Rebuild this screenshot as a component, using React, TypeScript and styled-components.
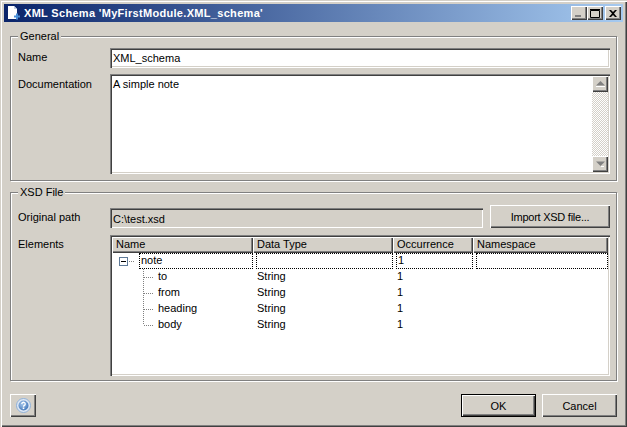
import React from 'react';
import styled, { createGlobalStyle, css } from 'styled-components';

const GlobalStyle = createGlobalStyle`
  html, body {
    margin: 0;
    padding: 0;
    background: #d4d0c8;
  }
  body {
    font-family: "Liberation Sans", Arial, sans-serif;
    font-size: 11px;
    color: #000;
  }
  * {
    box-sizing: border-box;
  }
`;

const raised = css`
  background: #d4d0c8;
  box-shadow: inset 1px 1px 0 #fff, inset -1px -1px 0 #404040, inset -2px -2px 0 #808080;
`;

const sunken = css`
  box-shadow: inset 1px 1px 0 #808080, inset 2px 2px 0 #404040, inset -1px -1px 0 #fff, inset -2px -2px 0 #d4d0c8;
`;

const Window = styled.div`
  width: 627px;
  height: 427px;
  padding: 4px;
  display: flex;
  flex-direction: column;
  background: #d4d0c8;
  box-shadow: inset 1px 1px 0 #d4d0c8, inset 2px 2px 0 #fff, inset -1px -1px 0 #404040, inset -2px -2px 0 #808080;
`;

const TitleBar = styled.div`
  height: 18px;
  flex-shrink: 0;
  display: flex;
  align-items: center;
  padding: 0 2px;
  background: linear-gradient(to right, #0a246a, #a6caf0);
`;

const TitleIcon = styled.svg`
  width: 16px;
  height: 16px;
  margin-right: 2px;
  flex-shrink: 0;
`;

const TitleText = styled.span`
  flex: 1;
  color: #fff;
  font-weight: bold;
  font-size: 11px;
  letter-spacing: 0.31px;
  white-space: nowrap;
`;

const CaptionButton = styled.div<{ $gap?: boolean }>`
  ${raised}
  width: 16px;
  height: 14px;
  margin-left: ${p => (p.$gap ? '2px' : '0')};
  display: flex;
  align-items: center;
  justify-content: center;
`;

const Body = styled.div`
  flex: 1;
  display: flex;
  flex-direction: column;
  padding: 8px 6px 6px 6px;
`;

const Group = styled.fieldset<{ $height: number; $gapTop?: number; $top: number; $gap: number }>`
  margin: ${p => p.$gapTop ?? 0}px 0 0;
  padding: ${p => p.$top}px 6px 0 7px;
  height: ${p => p.$height}px;
  min-width: 0;
  border: 1px solid #808080;
  box-shadow: inset 1px 1px 0 #fff, 1px 1px 0 #fff;
  display: flex;
  flex-direction: column;
  gap: ${p => p.$gap}px;
`;

const GroupTitle = styled.legend`
  margin-left: 0;
  padding: 0 2px;
  background: #d4d0c8;
  line-height: 13px;
`;

const FieldRow = styled.div`
  display: grid;
  grid-template-columns: 92px 1fr;
  align-items: start;
`;

const Label = styled.label<{ $top: number }>`
  line-height: 13px;
  padding-top: ${p => p.$top}px;
`;

const TextBox = styled.div`
  ${sunken}
  height: 20px;
  padding: 3px;
  line-height: 14px;
  background: #fff;
`;

const NoteArea = styled.div`
  ${sunken}
  height: 100px;
  background: #fff;
  display: flex;
  justify-content: space-between;
  padding: 2px;
`;

const NoteText = styled.div`
  padding: 1px;
  line-height: 14px;
`;

const ScrollBar = styled.div`
  width: 16px;
  display: flex;
  flex-direction: column;
  background: repeating-conic-gradient(#d4d0c8 0 25%, #fff 0 50%) 0 0 / 2px 2px;
`;

const ScrollButton = styled.div`
  ${raised}
  width: 16px;
  height: 16px;
  display: flex;
  align-items: center;
  justify-content: center;
`;

const ScrollTrack = styled.div`
  flex: 1;
`;

const PathRow = styled.div`
  display: flex;
  align-items: flex-end;
  gap: 7px;
`;

const PathBox = styled(TextBox)`
  flex: 1;
  padding-top: 4px;
  background: #d4d0c8;
`;

const PushButton = styled.button<{ $width: number; $isDefault?: boolean }>`
  ${raised}
  width: ${p => p.$width}px;
  height: 23px;
  padding: 0;
  border: 0;
  font: inherit;
  color: #000;
  display: flex;
  align-items: center;
  justify-content: center;
  flex-shrink: 0;
  ${p =>
    p.$isDefault &&
    css`
      box-shadow: inset 0 0 0 1px #000, inset 2px 2px 0 #fff, inset -2px -2px 0 #404040, inset -3px -3px 0 #808080;
    `}
`;

const ImportButton = styled(PushButton)`
  letter-spacing: -0.25px;
`;

const TableFrame = styled.div`
  ${sunken}
  height: 141px;
  background: #fff;
  padding: 2px;
`;

const HeaderRow = styled.div`
  display: grid;
  grid-template-columns: 141px 140px 80px 1fr;
  height: 16px;
`;

const HeaderCell = styled.div`
  ${raised}
  line-height: 15px;
  padding-left: 4px;
  white-space: nowrap;
`;

const TreeRow = styled.div`
  display: grid;
  grid-template-columns: 141px 140px 80px 1fr;
  height: 16px;
  line-height: 15px;
`;

const NameCell = styled.div`
  display: flex;
  align-items: flex-start;
  padding-left: 7px;
`;

const Cell = styled.div`
  padding-left: 4px;
`;

const FocusCell = styled.div<{ $inset: number }>`
  margin-left: ${p => p.$inset}px;
  border: 1px dotted #000;
  padding-left: 1px;
  height: 16px;
  line-height: 13px;
  flex: 1;
`;

const ChildName = styled.span`
  margin-left: -1px;
`;

const Footer = styled.div`
  display: flex;
  align-items: center;
  gap: 6px;
  margin-top: auto;
`;

const Spacer = styled.div`
  flex: 1;
`;

const children = [
  { name: 'to', last: false },
  { name: 'from', last: false },
  { name: 'heading', last: false },
  { name: 'body', last: true },
];

const columns = ['Name', 'Data Type', 'Occurrence', 'Namespace'];

export default function App() {
  return (
    <>
      <GlobalStyle />
      <Window>
        <TitleBar>
          <TitleIcon viewBox="0 0 16 16">
            <path d="M2 1h6l3 3v10H2z" fill="#fff" />
            <path d="M8 1v3h3z" fill="#c4d2e4" />
            <path d="M8 11.500h6M11 8.500v6" stroke="#4a8fd8" strokeWidth="2" />
          </TitleIcon>
          <TitleText>XML Schema 'MyFirstModule.XML_schema'</TitleText>
          <CaptionButton>
            <svg width="8" height="8" viewBox="0 0 8 8">
              <path d="M0 6h6v2H0z" fill="#808080" />
            </svg>
          </CaptionButton>
          <CaptionButton>
            <svg width="10" height="9" viewBox="0 0 10 9">
              <path d="M.5 1.500h9v7h-9z" fill="none" stroke="#000" />
              <path d="M0 .5h10" stroke="#000" />
            </svg>
          </CaptionButton>
          <CaptionButton $gap>
            <svg width="8" height="7" viewBox="0 0 8 7">
              <path d="M0 0h2l2 2 2-2h2L5 3.5 8 7H6L4 5 2 7H0l3-3.500z" fill="#000" />
            </svg>
          </CaptionButton>
        </TitleBar>
        <Body>
          <Group $height={151} $top={5} $gap={6}>
            <GroupTitle>General</GroupTitle>
            <FieldRow>
              <Label $top={3}>Name</Label>
              <TextBox>XML_schema</TextBox>
            </FieldRow>
            <FieldRow>
              <Label $top={4}>Documentation</Label>
              <NoteArea>
                <NoteText>A simple note</NoteText>
                <ScrollBar>
                  <ScrollButton>
                    <svg width="9" height="6" viewBox="0 0 9 6">
                      <path d="M4.500 0L9 4.500H0z" fill="#808080" />
                      <path d="M0 5.500h9" stroke="#fff" />
                    </svg>
                  </ScrollButton>
                  <ScrollTrack />
                  <ScrollButton>
                    <svg width="9" height="6" viewBox="0 0 9 6">
                      <path d="M0 .5h9L4.500 5z" fill="#808080" />
                      <path d="M5 5.500h3" stroke="#fff" />
                    </svg>
                  </ScrollButton>
                </ScrollBar>
              </NoteArea>
            </FieldRow>
          </Group>
          <Group $height={195} $gapTop={5} $top={6} $gap={7}>
            <GroupTitle>XSD File</GroupTitle>
            <FieldRow>
              <Label $top={6}>Original path</Label>
              <PathRow>
                <PathBox>C:\test.xsd</PathBox>
                <ImportButton $width={120}>Import XSD file...</ImportButton>
              </PathRow>
            </FieldRow>
            <FieldRow>
              <Label $top={3}>Elements</Label>
              <TableFrame>
                <HeaderRow>
                  {columns.map(title => (
                    <HeaderCell key={title}>{title}</HeaderCell>
                  ))}
                </HeaderRow>
                <TreeRow>
                  <NameCell>
                    <svg width="20" height="16" viewBox="0 0 20 16" style={{ flexShrink: 0 }}>
                      <rect x="0.500" y="4.500" width="8" height="8" fill="#fff" stroke="#5f7a98" />
                      <path d="M2 8.500h5" stroke="#000" />
                      <path d="M10 8.500h6" stroke="#808080" strokeDasharray="1 1" />
                    </svg>
                    <FocusCell $inset={0}>note</FocusCell>
                  </NameCell>
                  <FocusCell $inset={3} />
                  <FocusCell $inset={3}>1</FocusCell>
                  <FocusCell $inset={3} />
                </TreeRow>
                {children.map(child => (
                  <TreeRow key={child.name}>
                    <NameCell>
                      <svg width="40" height="16" viewBox="0 0 40 16" style={{ flexShrink: 0 }}>
                        <path
                          d={child.last ? 'M24.500 0v8' : 'M24.500 0v16'}
                          stroke="#808080"
                          strokeDasharray="1 1"
                          fill="none"
                        />
                        <path d="M25 8.500h9" stroke="#808080" strokeDasharray="1 1" fill="none" />
                      </svg>
                      <ChildName>{child.name}</ChildName>
                    </NameCell>
                    <Cell>String</Cell>
                    <Cell>1</Cell>
                    <Cell />
                  </TreeRow>
                ))}
              </TableFrame>
            </FieldRow>
          </Group>
          <Footer>
            <PushButton $width={26}>
              <svg width="15" height="15" viewBox="0 0 15 15">
                <defs>
                  <radialGradient id="helpBlue" cx="0.4" cy="0.35" r="0.7">
                    <stop offset="0" stopColor="#a8c8ec" />
                    <stop offset="1" stopColor="#3f74b8" />
                  </radialGradient>
                </defs>
                <circle cx="7.500" cy="7.500" r="7" fill="#dfe8f4" stroke="#8fb0d8" />
                <circle cx="7.500" cy="7.500" r="5" fill="url(#helpBlue)" />
                <path d="M5.800 6a1.700 1.700 0 1 1 2.600 1.400c-.6.400-.9.700-.9 1.300" fill="none" stroke="#fff" strokeWidth="1.300" />
                <rect x="6.700" y="9.500" width="1.600" height="1.600" fill="#fff" />
              </svg>
            </PushButton>
            <Spacer />
            <PushButton $width={75} $isDefault>
              OK
            </PushButton>
            <PushButton $width={75}>Cancel</PushButton>
          </Footer>
        </Body>
      </Window>
    </>
  );
}
